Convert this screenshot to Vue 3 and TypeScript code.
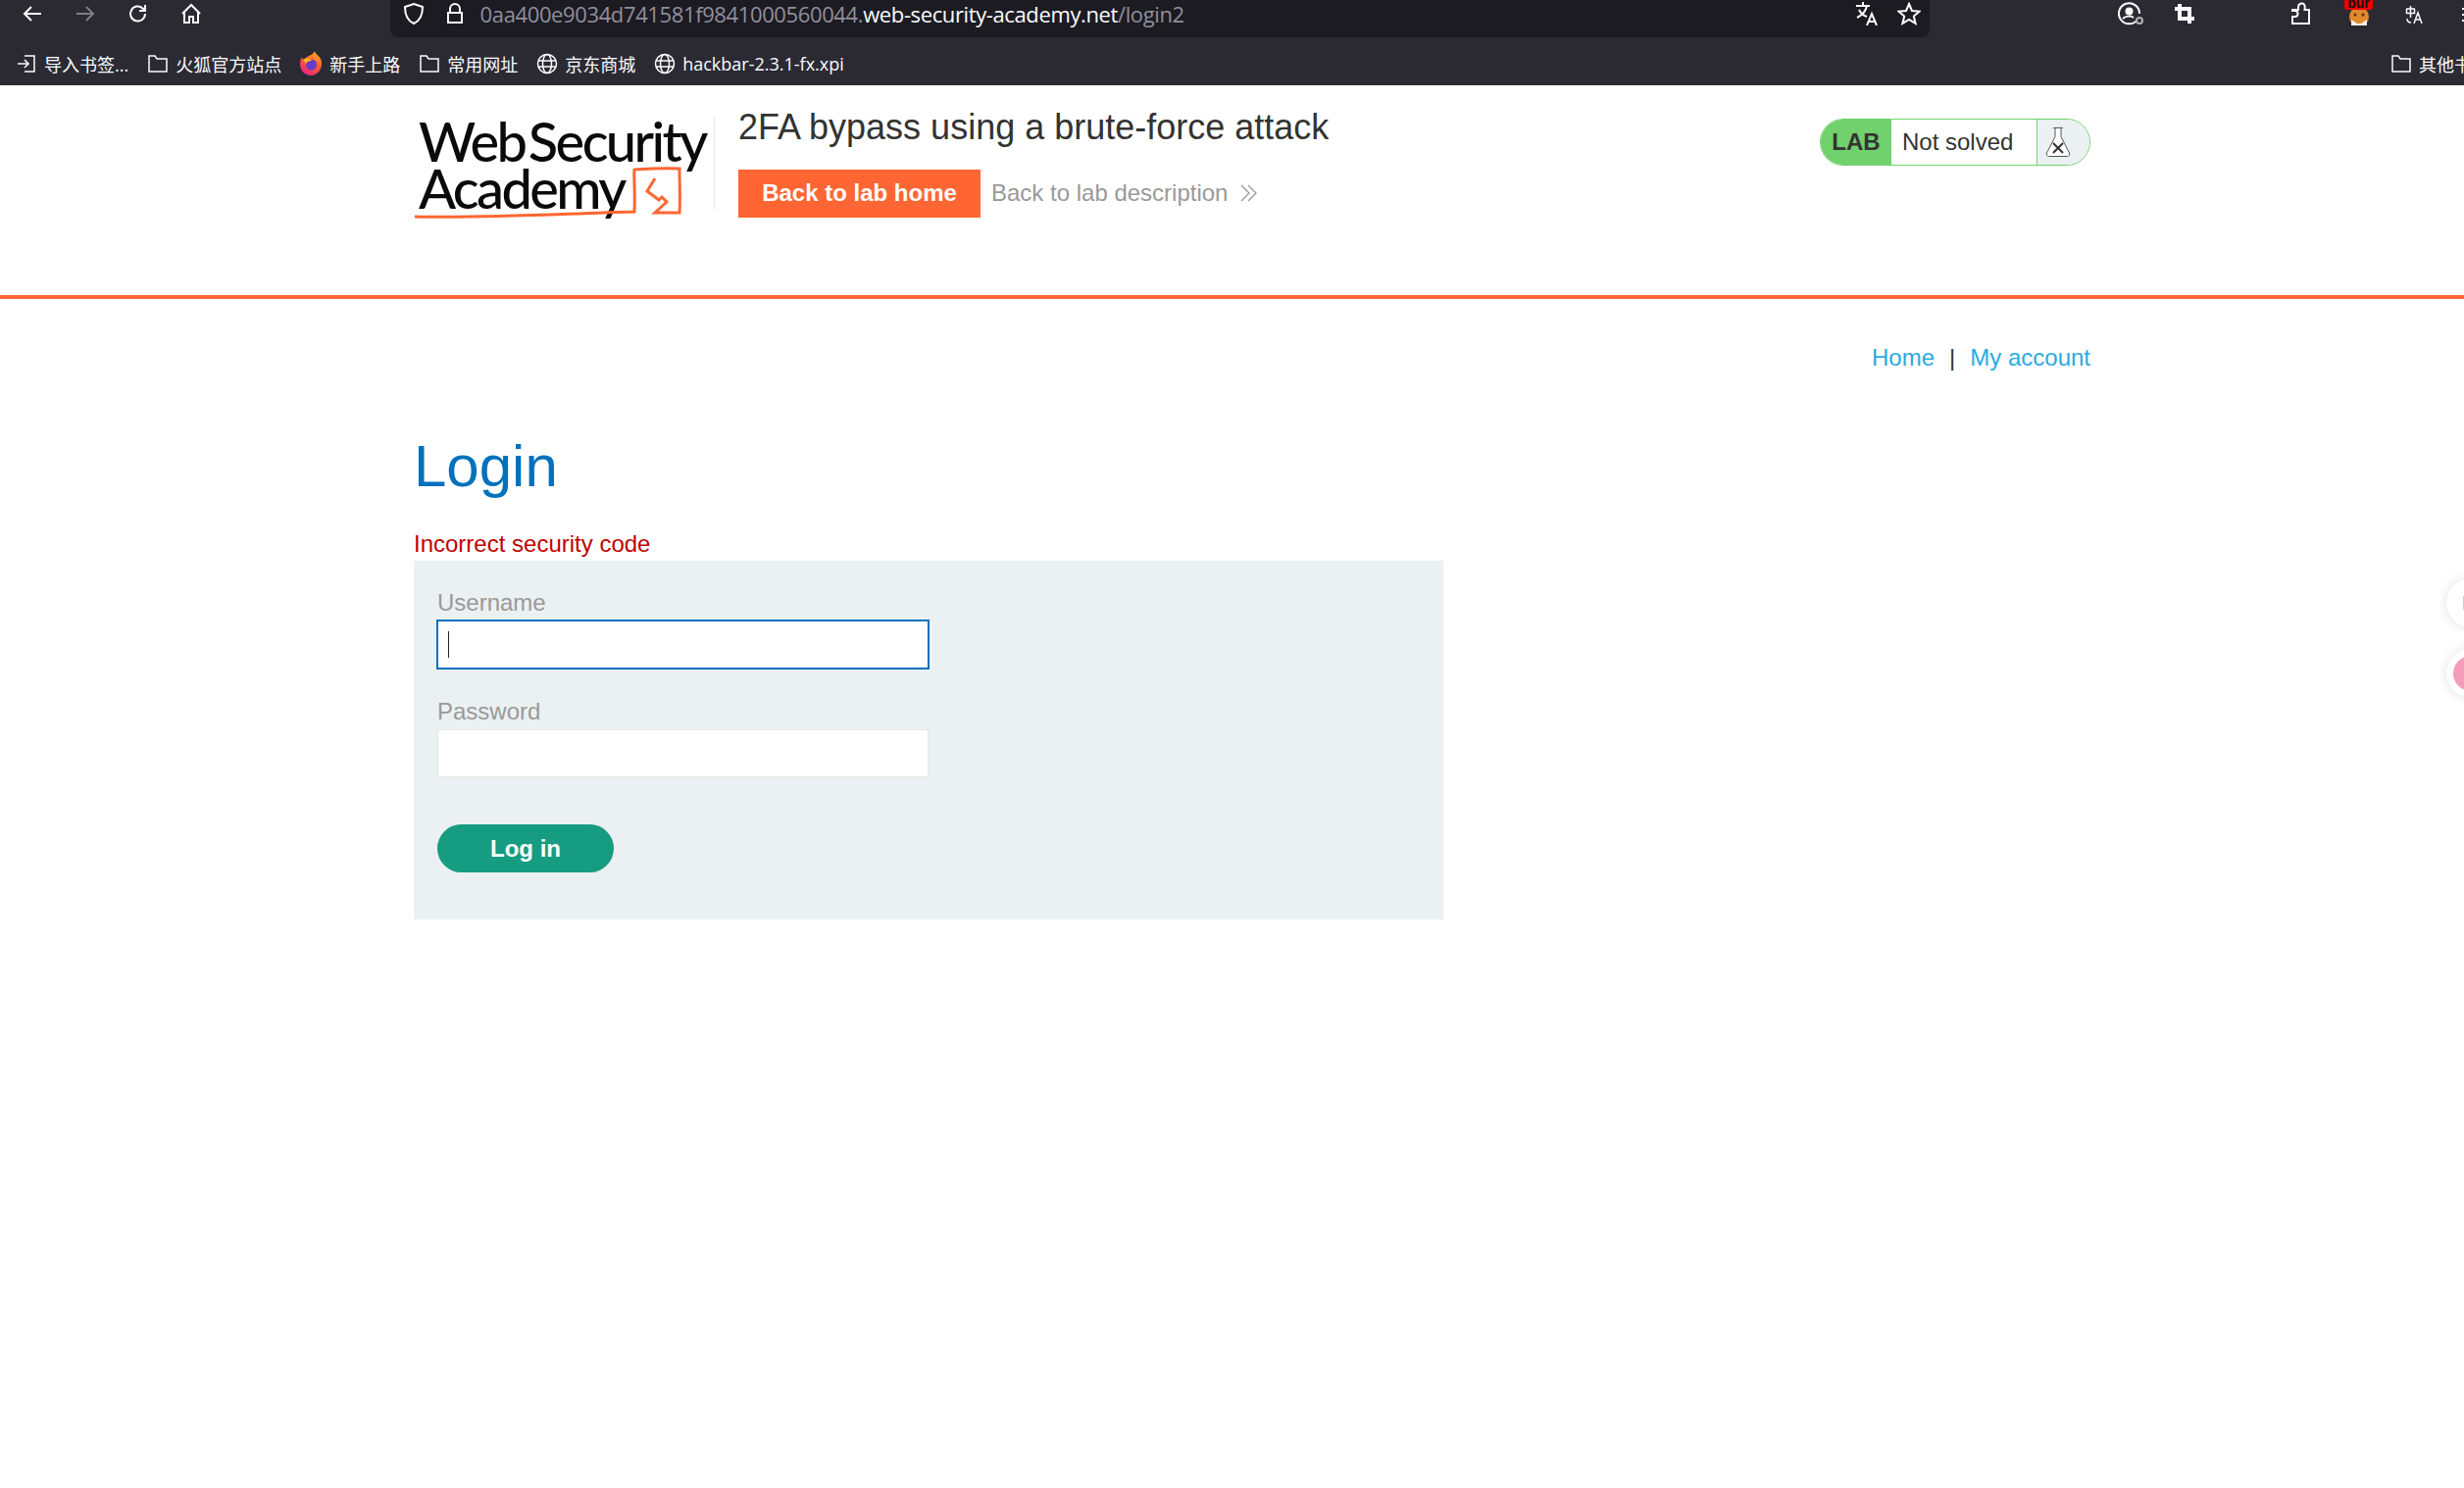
<template>
  <div class="page">
    <!-- browser chrome -->
    <div class="chrome">
      <div class="toolbar">
        <div class="nav-icons">
          <svg width="24" height="24" viewBox="0 0 24 24" class="ic"><path d="M21 12H4M11 5l-7 7 7 7" /></svg>
          <svg width="24" height="24" viewBox="0 0 24 24" class="ic dim"><path d="M3 12h17M13 5l7 7-7 7" /></svg>
          <svg width="24" height="24" viewBox="0 0 24 24" class="ic"><path d="M19 12a7.500 7.500 0 1 1-2.400-5.500L19 9M19 3v6h-6" /></svg>
          <svg width="24" height="24" viewBox="0 0 24 24" class="ic"><path d="M3 12l9-9 9 9M5 10v11h5v-6h4v6h5V10" /></svg>
        </div>
        <div class="urlbar">
          <svg width="22" height="24" viewBox="0 0 22 24" class="ic"><path d="M11 2l9 3c0 8-2 14-9 17C4 19 2 13 2 5z" /></svg>
          <svg width="20" height="24" viewBox="0 0 20 24" class="ic"><path d="M5 11V7a5 5 0 0 1 10 0v4M3 11h14v10H3z" /></svg>
          <span class="url"><span class="url-dim">0aa400e9034d741581f9841000560044.</span>web-security-academy.net<span class="url-dim">/login2</span></span>
          <svg width="24" height="24" viewBox="0 0 24 24" class="ic push"><path d="M1 4h14M8 0v4M12 4c-1 5-4 9-10 12M4 8c2 4 5 6 8 7M12 24l5-12 5 12M14 20h6" /></svg>
          <svg width="24" height="24" viewBox="0 0 24 24" class="ic"><path d="M12 2l3 7 7.500.6-5.700 4.900 1.800 7.300-6.600-4-6.600 4 1.800-7.300L1.500 9.600 9 9z" /></svg>
        </div>
        <div class="ext-icons">
          <svg width="26" height="24" viewBox="0 0 26 24" class="ic">
            <path d="M20 18A10.500 10.500 0 1 1 22 12" />
            <circle cx="11.500" cy="9.500" r="3" fill="#fbfbfe" />
            <path d="M5 17c3-3 9-3 11-1" />
            <circle cx="22" cy="19" r="3" class="acct-dot" />
          </svg>
          <svg width="20" height="20" viewBox="0 0 20 20" class="ic crop"><path d="M5 0v15h15M0 5h15v15" /></svg>
          <svg width="20" height="24" viewBox="0 0 20 24" class="ic puzzle"><path d="M8 8V5a3.500 3.500 0 0 1 6-2.500c1 1 1 2 .500 5.500H19v14H2v-7h2.500a3 3 0 0 0 0-6H2V8z" /></svg>
          <div class="burp">
            <span class="burp-badge">bur</span>
            <svg width="24" height="16" viewBox="0 0 24 16"><circle cx="12" cy="7" r="10" fill="#e08a2c" /><path d="M4 10l6 4h4l6-4v6H4z" fill="#f3efe6" /><circle cx="8" cy="5" r="1.500" fill="#5a3312" /><circle cx="16" cy="5" r="1.500" fill="#5a3312" /></svg>
          </div>
          <svg width="20" height="20" viewBox="0 0 20 20" class="ic thin"><path d="M1 4h9M5.500 1v3M1.500 4v4.500h8V4M5.500 4v9M2 14c0 3 1 4 4 4M9 19l4-11 4 11M10.500 15h5" /></svg>
          <span class="menu-dots"></span>
        </div>
      </div>
      <div class="bookmarks">
        <div v-for="b in bookmarks" :key="b.label" class="bookmark">
          <svg v-if="b.icon === 'import'" width="22" height="22" viewBox="0 0 22 22" class="ic thin"><path d="M9 3h10v16H9M2 11h11M9 7l4 4-4 4" /></svg>
          <svg v-else-if="b.icon === 'folder'" width="22" height="22" viewBox="0 0 22 22" class="ic thin"><path d="M2 3h6l2 3h10v13H2z" /></svg>
          <svg v-else-if="b.icon === 'globe'" width="22" height="22" viewBox="0 0 22 22" class="ic thin"><circle cx="11" cy="11" r="9.500" /><ellipse cx="11" cy="11" rx="4.500" ry="9.500" /><path d="M2 8h18M2 14h18" /></svg>
          <svg v-else width="23" height="25" viewBox="0 0 23 25">
            <defs>
              <linearGradient id="fxBody" x1="0.800" y1="0" x2="0.300" y2="1">
                <stop offset="0" stop-color="#ffb21f" />
                <stop offset="0.500" stop-color="#ff5a36" />
                <stop offset="1" stop-color="#e5257f" />
              </linearGradient>
            </defs>
            <path d="M15 0c0 3 6 5 7 11 1 8-5 14-11 14S0 20 0 13c0-3 1-5 2-7 0 2 1 3 2 3 1-2 3-3 5-4 2-1 5-2 6-5z" fill="url(#fxBody)" />
            <circle cx="11.500" cy="14" r="5.500" fill="#6a3bc4" />
            <path d="M3 9c3-2 7-2 9 1-3 0-5 1-6 3z" fill="#ffb21f" />
          </svg>
          <span>{{ b.label }}</span>
        </div>
        <div class="bookmark other">
          <svg width="22" height="22" viewBox="0 0 22 22" class="ic thin"><path d="M2 3h6l2 3h10v13H2z" /></svg>
          <span>其他书签</span>
        </div>
      </div>
    </div>

    <!-- lab header -->
    <header class="lab-header">
      <div class="lab-inner">
        <div class="logo">
          <span class="logo-line first">Web Security</span>
          <span class="logo-line">Academy</span>
          <svg class="logo-mark" width="300" height="112" viewBox="0 0 300 112">
            <path class="mark-line" d="M1 100c70 2 150-3 224-5 1-20-1-40 0-43 15-1 30-2 46-1 0 14 1 30 0 45H246l12-11-5-5-3 3-12-9 8-13" />
          </svg>
        </div>
        <div class="lab-title">
          <h2>2FA bypass using a brute-force attack</h2>
          <div class="lab-links">
            <a class="back-home">Back to lab home</a>
            <a class="back-desc">Back to lab description
              <svg width="20" height="20" viewBox="0 0 20 20"><path d="M2 2l8 8-8 8M9 2l8 8-8 8" /></svg>
            </a>
          </div>
        </div>
        <div class="status">
          <span class="status-lab">LAB</span>
          <span class="status-text">Not solved</span>
          <span class="status-icon">
            <svg width="26" height="32" viewBox="0 0 26 32">
              <path class="flask" d="M8 1.500h10M10 1.500v9L1.500 27a2.500 2.500 0 0 0 2 3.500h19a2.500 2.500 0 0 0 2-3.500L16 10.500v-9" />
              <path class="flask-x" d="M8 17l10 10M18 17L8 27" />
            </svg>
          </span>
        </div>
      </div>
    </header>

    <!-- content -->
    <main class="content">
      <nav class="top-links">
        <a>Home</a>
        <span class="sep">|</span>
        <a>My account</a>
      </nav>
      <h1>Login</h1>
      <p class="error">Incorrect security code</p>
      <form class="login-form" @submit.prevent>
        <label for="username">Username</label>
        <div class="field">
          <input id="username" v-model="username" class="focused" type="text" />
          <span class="caret"></span>
        </div>
        <label for="password">Password</label>
        <div class="field">
          <input id="password" v-model="password" type="password" />
        </div>
        <button type="submit">Log in</button>
      </form>
    </main>

    <!-- floating buttons from a page extension -->
    <div class="float-btn first"><span class="float-mark"></span></div>
    <div class="float-btn second"><span class="float-pink"></span></div>
  </div>
</template>

<script setup lang="ts">
import { ref } from 'vue';

interface Bookmark {
  label: string;
  icon: 'import' | 'folder' | 'firefox' | 'globe';
}

const bookmarks: Bookmark[] = [
  { label: '导入书签...', icon: 'import' },
  { label: '火狐官方站点', icon: 'folder' },
  { label: '新手上路', icon: 'firefox' },
  { label: '常用网址', icon: 'folder' },
  { label: '京东商城', icon: 'globe' },
  { label: 'hackbar-2.3.1-fx.xpi', icon: 'globe' }
];

const username = ref('');
const password = ref('');
</script>

<style>
html, body {
  margin: 0;
  background: #fff;
  overflow: hidden;
}
</style>

<style scoped>
.page {
  position: relative;
  width: 2513px;
  height: 1518px;
  overflow: hidden;
  background: #fff;
  font-family: "Liberation Sans", Arial, sans-serif;
  color: #333332;
}

/* browser chrome */
.chrome {
  height: 87px;
  background: #2b2a33;
  color: #fbfbfe;
  font-family: "Open Sans", "Noto Sans CJK SC", sans-serif;
}

.toolbar {
  display: flex;
  height: 38px;
}

.ic {
  fill: none;
  stroke: #fbfbfe;
  stroke-width: 2;
  flex: none;
}

.ic.thin {
  stroke-width: 1.5;
}

.ic.dim {
  opacity: 0.4;
}

.nav-icons {
  display: flex;
  align-items: flex-start;
  gap: 30px;
  width: 398px;
  padding-left: 21px;
  padding-top: 2px;
  box-sizing: border-box;
}

.urlbar {
  display: flex;
  align-items: flex-start;
  width: 1572px;
  padding: 2px 9px 0 13px;
  box-sizing: border-box;
  background: #1c1b22;
  border-radius: 0 0 8px 8px;
}

.urlbar .ic + .ic {
  margin-left: 21px;
}

.url {
  margin-left: 16px;
  font-size: 22px;
  line-height: 24px;
  letter-spacing: -0.38px;
  white-space: nowrap;
}

.url-dim {
  color: #8f8f9d;
}

.urlbar .ic.push {
  margin-left: auto;
}

.urlbar .ic.push + .ic {
  margin-left: 19px;
}

.ext-icons {
  flex: 1;
  display: flex;
  align-items: flex-start;
  padding: 2px 0 0 192px;
}

.acct-dot {
  stroke: #b1b1b3;
  fill: #2b2a33;
}

.crop {
  margin: 2px 0 0 32px;
  stroke-width: 4;
}

.puzzle {
  margin-left: 98px;
}

.burp {
  position: relative;
  margin-left: 35px;
  width: 29px;
  height: 26px;
  margin-top: -2px;
  padding: 10px 0 0 3px;
  box-sizing: border-box;
  line-height: 0;
}

.burp-badge {
  position: absolute;
  left: 0;
  top: -3px;
  width: 29px;
  height: 13px;
  border-radius: 0 0 3px 3px;
  background: #e00;
  color: #111;
  font: 700 14px/13px "Liberation Sans", sans-serif;
  text-align: center;
  overflow: hidden;
}

.burp + .ic {
  margin: 3px 0 0 33px;
}

.menu-dots {
  margin: 6px 0 0 38px;
  width: 2px;
  height: 14px;
  background: repeating-linear-gradient(#fbfbfe 0 2px, transparent 2px 6px);
}

.bookmarks {
  position: relative;
  display: flex;
  align-items: center;
  height: 49px;
  margin-top: 2px;
  gap: 19px;
  padding-left: 16px;
  font-size: 18px;
  white-space: nowrap;
}

.bookmark {
  display: flex;
  align-items: center;
  gap: 7px;
}

.bookmark.other {
  position: absolute;
  left: 2438px;
  top: 0;
  height: 49px;
}

/* lab header */
.lab-header {
  height: 214px;
  border-bottom: 4px solid #ff6633;
}

.lab-inner {
  display: flex;
  align-items: flex-start;
  width: 1710px;
  margin-left: 422px;
  padding-top: 33px;
}

.logo {
  position: relative;
  width: 306px;
  height: 93px;
  flex: none;
  border-right: 1px solid #e6e6e6;
  font-family: Lato, "Open Sans", sans-serif;
  color: #0a0a0a;
}

.logo-line {
  display: block;
  padding-left: 5px;
  font-size: 56px;
  line-height: 47px;
  letter-spacing: -2.6px;
  font-weight: 500;
  white-space: nowrap;
}

.logo-line.first {
  margin-bottom: 1px;
  word-spacing: -8px;
}

.logo-mark {
  position: absolute;
  left: 0;
  top: 1px;
  overflow: visible;
}

.mark-line {
  fill: none;
  stroke: #ff6633;
  stroke-width: 3;
}

.lab-title {
  margin-top: -10px;
  margin-left: 24px;
  width: 1000px;
}

.lab-title h2 {
  margin: 0;
  font-size: 36px;
  font-weight: 400;
  line-height: 40px;
  color: #333332;
}

.lab-links {
  display: flex;
  align-items: center;
  margin-top: 23px;
}

.back-home {
  width: 247px;
  height: 49px;
  background: #ff6633;
  color: #fff;
  font-weight: 700;
  font-size: 24px;
  line-height: 47px;
  text-align: center;
}

.back-desc {
  display: flex;
  align-items: center;
  gap: 12px;
  margin-left: 11px;
  margin-top: -2px;
  color: #999;
  font-size: 24px;
}

.back-desc svg {
  fill: none;
  stroke: #999;
  stroke-width: 1.3;
}

.status {
  display: flex;
  height: 48px;
  width: 276px;
  margin-left: auto;
  margin-top: 1px;
  box-sizing: border-box;
  border: 1.5px solid #70d16d;
  border-radius: 24px;
  overflow: hidden;
  font-size: 24px;
  line-height: 45px;
}

.status-lab {
  width: 72px;
  flex: none;
  background: #70d16d;
  font-weight: 700;
  text-align: center;
}

.status-text {
  width: 149px;
  flex: none;
  box-sizing: border-box;
  padding-left: 11px;
  background: #fff;
  border-right: 1.5px solid #70d16d;
}

.status-icon {
  flex: 1;
  display: flex;
  align-items: center;
  padding-left: 8px;
  background: #ebf0f2;
}

.flask {
  fill: #fff;
  stroke: #555;
  stroke-width: 1;
}

.flask-x {
  fill: none;
  stroke: #333;
  stroke-width: 2;
}

/* content */
.content {
  width: 1710px;
  margin-left: 422px;
}

.top-links {
  display: flex;
  justify-content: flex-end;
  gap: 15px;
  margin-top: 46px;
  font-size: 24px;
  line-height: 28px;
  color: #29abe2;
}

.sep {
  color: #333332;
}

h1 {
  margin: 61px 0 0;
  font-size: 60px;
  font-weight: 400;
  line-height: 72px;
  color: #0071bc;
}

.error {
  margin: 29px 0 3px;
  font-size: 24px;
  line-height: 28px;
  color: #bf0000;
}

.login-form {
  box-sizing: border-box;
  width: 1050px;
  height: 366px;
  padding: 29px 24px 0;
  background: #ebf0f2;
}

.login-form label {
  display: block;
  font-size: 24px;
  line-height: 28px;
  color: #999;
}

.field {
  position: relative;
  width: 501px;
  height: 49px;
  margin: 4px 0 31px;
}

.field input {
  display: block;
  box-sizing: border-box;
  width: 100%;
  height: 100%;
  border: 1px solid #e6e6e6;
  background: #fff;
  outline: none;
  font-size: 24px;
}

.field input.focused {
  width: 503px;
  height: 51px;
  margin: -1px;
  border: 2px solid #0071bc;
}

.caret {
  position: absolute;
  left: 11px;
  top: 12px;
  width: 1px;
  height: 27px;
  background: #222;
}

.login-form button {
  display: block;
  width: 180px;
  height: 49px;
  margin-top: 48px;
  border: 0;
  border-radius: 25px;
  background: #169c80;
  color: #fff;
  font-family: inherit;
  font-size: 24px;
  font-weight: 700;
}

/* floating buttons */
.float-btn {
  position: absolute;
  left: 2495px;
  width: 50px;
  height: 50px;
  border-radius: 50%;
  background: #fff;
  box-shadow: 0 0 12px rgba(0, 0, 0, 0.12);
}

.float-btn.first {
  top: 590px;
}

.float-btn.second {
  top: 662px;
}

.float-mark {
  position: absolute;
  left: 17px;
  top: 18px;
  width: 3px;
  height: 14px;
  background: #ccc;
}

.float-pink {
  position: absolute;
  left: 7px;
  top: 7px;
  width: 36px;
  height: 36px;
  border-radius: 50%;
  background: #f59db8;
}
</style>
